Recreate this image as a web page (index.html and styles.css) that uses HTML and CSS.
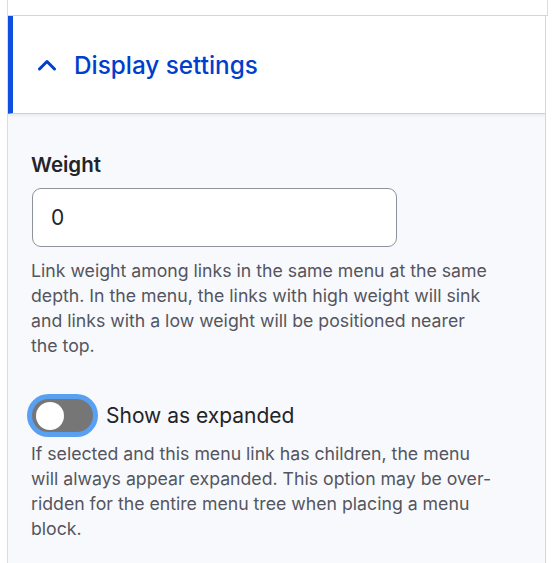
FILE: index.html
```html
<!DOCTYPE html>
<html lang="en">
<head>
<meta charset="utf-8">
<link rel="stylesheet" href="styles.css">
</head>
<body>
<div class="prev"></div>
<details class="details" open>
  <summary class="summary">
    <svg class="chevron" width="20" height="12" viewBox="0 0 20 12" aria-hidden="true"><polyline points="2.5,10 10,2.5 17.5,10" fill="none" stroke="#003ecc" stroke-width="3" stroke-linecap="round" stroke-linejoin="round"/></svg>
    <span class="summary-text">Display settings</span>
  </summary>
  <div class="wrapper">
    <div class="item">
      <label class="label" for="weight">Weight</label>
      <input class="input" id="weight" type="text" value="0">
      <div class="desc">Link weight among links in the same menu at the same depth. In the menu, the links with high weight will sink and links with a low weight will be positioned nearer the top.</div>
    </div>
    <div class="item item-toggle">
      <div class="toggle-row">
        <span class="toggle"><span class="knob"></span></span>
        <span class="toggle-label">Show as expanded</span>
      </div>
      <div class="desc">If selected and this menu link has children, the menu will always appear expanded. This option may be over-ridden for the entire menu tree when placing a menu block.</div>
    </div>
  </div>
</details>
</body>
</html>
```
FILE: styles.css
```css
html, body {
  margin: 0;
  padding: 0;
  background: #ffffff;
  font-family: Inter, "Noto Sans", sans-serif;
}
.prev {
  margin-left: 7px;
  width: 539px;
  height: 15px;
  border-left: 1px solid #dcdde2;
  border-right: 1px solid #dcdde2;
  border-bottom: 1px solid #d4d5da;
  background: #fff;
}
.details {
  margin-left: 7px;
  width: 539px;
  border-left: 1px solid #dcdde2;
  border-right: 1px solid #d4d5da;
  background: #f8f9fc;
  height: 547px;
  box-sizing: border-box;
  overflow: hidden;
}
.summary {
  list-style: none;
  display: flex;
  align-items: center;
  gap: 17px;
  height: 97px;
  margin-left: -1px;
  padding-left: 24px;
  border-left: 6px solid #0f4fe0;
  border-bottom: 1px solid #cfd0d6;
  background: #fff;
  box-shadow: 0 2px 3px rgba(0, 0, 0, 0.06);
  color: #003ecc;
  cursor: pointer;
}
.summary::-webkit-details-marker { display: none; }
.chevron { display: block; flex: none; }
.summary-text {
  font-size: 24.3px;
  font-weight: 500;
}
.wrapper {
  padding: 38px 24px 0 23px;
}
.item { max-width: 465px; }
.label {
  display: block;
  font-size: 20.5px;
  font-weight: 600;
  color: #232429;
  line-height: 26px;
  margin-bottom: 10px;
}
.input {
  display: block;
  box-sizing: border-box;
  width: 365px;
  height: 59px;
  margin-left: 1px;
  padding: 0 18px;
  border: 1px solid #8e929c;
  border-radius: 9px;
  background: #fff;
  font-family: inherit;
  font-size: 21px;
  color: #232429;
  margin-bottom: 11px;
}
.desc {
  font-size: 17.7px;
  line-height: 25px;
  color: #545560;
}
.item-toggle { margin-top: 36px; }
.toggle-row {
  display: flex;
  align-items: center;
  gap: 8px;
  margin-bottom: 4px;
  margin-left: -4px;
}
.toggle {
  display: flex;
  align-items: center;
  box-sizing: border-box;
  width: 71px;
  height: 43px;
  padding: 0 0 0 4px;
  border: 5px solid #58a0f2;
  border-radius: 22px;
  background: #767676;
  flex: none;
}
.knob {
  width: 28px;
  height: 28px;
  border-radius: 50%;
  background: #fff;
}
.toggle-label {
  font-size: 21px;
  color: #232429;
}
```
